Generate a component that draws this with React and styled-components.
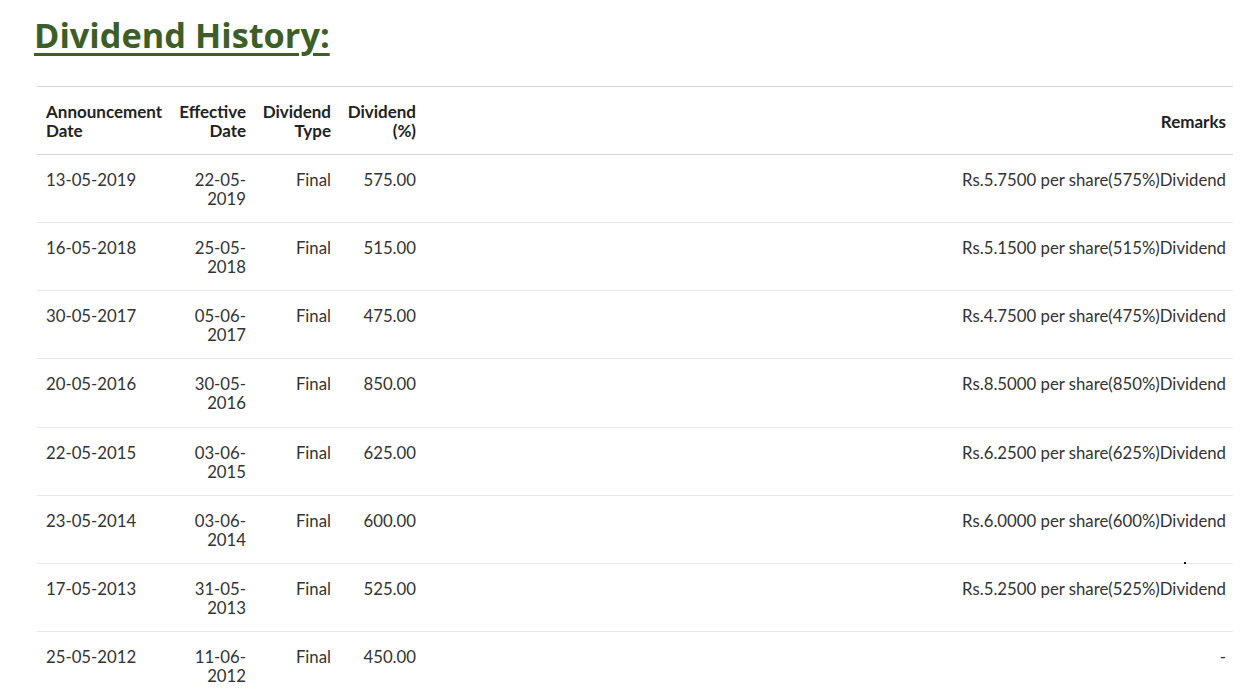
import React from 'react'
import styled, {createGlobalStyle} from 'styled-components'

const GlobalStyle = createGlobalStyle`
  html, body {
    margin: 0;
    padding: 0;
    background: #fff;
  }
  body {
    font-family: Lato, "Open Sans", sans-serif;
    color: #333;
  }
`

const Page = styled.div`
  position: relative;
  padding: 12px 10px 0 34px;
`

const Title = styled.h2`
  margin: 0 0 28px 0;
  font-family: "Open Sans", "Noto Sans", sans-serif;
  font-weight: 700;
  font-size: 34.3px;
  line-height: 46px;
  color: #3d5f27;
  text-decoration: underline;
  text-decoration-thickness: 3px;
  text-underline-offset: 5px;
`

const Table = styled.table`
  margin-left: 3px;
  width: 1196px;
  border-collapse: collapse;
  table-layout: fixed;
  border-top: 1px solid #d6d6d6;
`

const Col = styled.col`
  width: ${p => p.w ? p.w + 'px' : 'auto'};
`

const Th = styled.th`
  padding: 15px 7px 14px 9px;
  font-size: 17px;
  line-height: 19px;
  font-weight: 700;
  color: #222;
  text-align: ${p => p.left ? 'left' : 'right'};
  vertical-align: middle;
  border-bottom: 1px solid #d6d6d6;
  white-space: nowrap;
`

const Td = styled.td`
  padding: 15px 7px 14.15px 9px;
  font-size: 16.75px;
  line-height: 19px;
  color: #333;
  text-align: ${p => p.left ? 'left' : 'right'};
  vertical-align: top;
  border-bottom: 1px solid #e8e8e8;
  white-space: nowrap;
`

const Speck = styled.span`
  position: absolute;
  left: 1184px;
  top: 562px;
  width: 2px;
  height: 2px;
  background: #111;
`

const rows = [
  ['13-05-2019', '22-05-2019', 'Final', '575.00', 'Rs.5.7500 per share(575%)Dividend'],
  ['16-05-2018', '25-05-2018', 'Final', '515.00', 'Rs.5.1500 per share(515%)Dividend'],
  ['30-05-2017', '05-06-2017', 'Final', '475.00', 'Rs.4.7500 per share(475%)Dividend'],
  ['20-05-2016', '30-05-2016', 'Final', '850.00', 'Rs.8.5000 per share(850%)Dividend'],
  ['22-05-2015', '03-06-2015', 'Final', '625.00', 'Rs.6.2500 per share(625%)Dividend'],
  ['23-05-2014', '03-06-2014', 'Final', '600.00', 'Rs.6.0000 per share(600%)Dividend'],
  ['17-05-2013', '31-05-2013', 'Final', '525.00', 'Rs.5.2500 per share(525%)Dividend'],
  ['25-05-2012', '11-06-2012', 'Final', '450.00', '-'],
]

const App = () => {
  return (
    <>
      <GlobalStyle />
      <Page>
        <Title>Dividend History:</Title>
        <Table>
          <colgroup>
            <Col w={131} />
            <Col w={85} />
            <Col w={85} />
            <Col w={85} />
            <Col />
          </colgroup>
          <thead>
            <tr>
              <Th left>Announcement<br />Date</Th>
              <Th>Effective<br />Date</Th>
              <Th>Dividend<br />Type</Th>
              <Th>Dividend<br />(%)</Th>
              <Th>Remarks</Th>
            </tr>
          </thead>
          <tbody>
            {rows.map(r => (
              <tr key={r[0]}>
                <Td left>{r[0]}</Td>
                <Td>{r[1].slice(0, 6)}<br />{r[1].slice(6)}</Td>
                <Td>{r[2]}</Td>
                <Td>{r[3]}</Td>
                <Td>{r[4]}</Td>
              </tr>
            ))}
          </tbody>
        </Table>
        <Speck />
      </Page>
    </>
  )
}

export default App
